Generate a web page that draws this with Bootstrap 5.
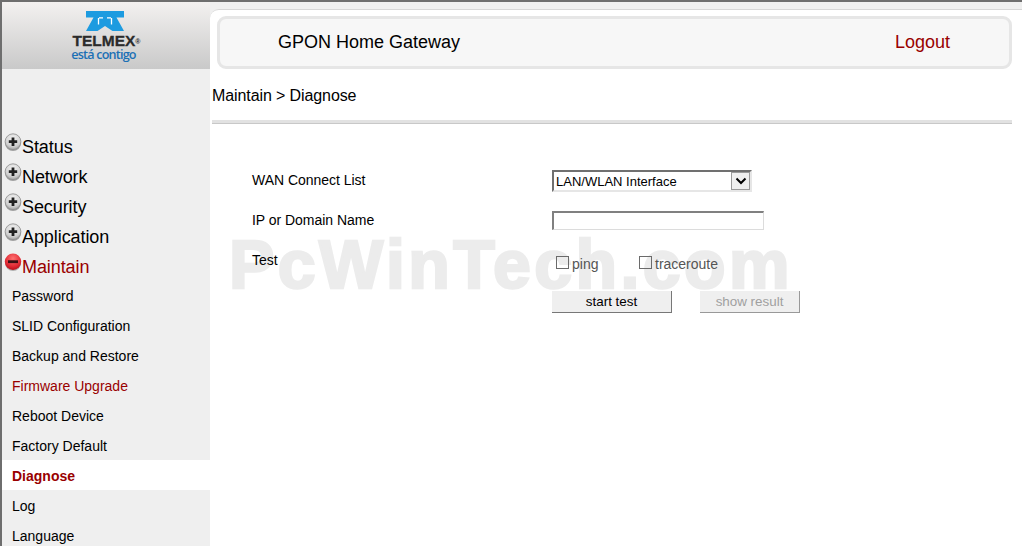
<!DOCTYPE html>
<html lang="en">
<head>
<meta charset="utf-8">
<title>GPON Home Gateway</title>
<link rel="stylesheet" href="https://cdn.jsdelivr.net/npm/bootstrap@5.3.0/dist/css/bootstrap.min.css">
<style>
html,body{height:546px;overflow:hidden;background:#fff}
body{font-family:"Liberation Sans",Arial,sans-serif;color:#000;font-size:14px;line-height:1.2}
.gw-shell{height:546px;border-top:2px solid #6e6e6e;border-left:2px solid #6e6e6e;position:relative;overflow:hidden}
.gw-side{width:208px;flex:none;background:#efefef;height:544px}
.gw-logo{height:67px;background:linear-gradient(#f3f1f0,#c9c9c9);padding-top:9px}
.gw-logo svg{display:block;margin-left:-3px}
.gw-word{font-weight:700;font-size:15.5px;line-height:11px;color:#2b2b2b;-webkit-text-stroke:.3px #2b2b2b;margin-top:4px;margin-left:1px}
.gw-reg{font-size:7px;vertical-align:top;-webkit-text-stroke:0;line-height:14px}
.gw-tag{font-family:"Open Sans","Liberation Sans",sans-serif;font-size:12.6px;line-height:8px;margin-top:2px;font-weight:600;color:#1c70b5;letter-spacing:-.8px;margin-left:-5px}
.gw-menu{margin-top:61px}
.gw-cat{height:30px;font-size:18px;color:#000;padding-left:2px;text-decoration:none;line-height:34px;letter-spacing:-.08px}
.gw-cat svg{flex:none;margin-top:3px}
.gw-cat.is-open{color:#990000}
.gw-sub{height:30px;line-height:32px;padding-left:10px;font-size:14px;color:#000;text-decoration:none;display:block}
.gw-sub.is-hot{color:#990000}
.gw-sub.is-active{background:#fff;color:#990000;font-weight:700}
.gw-main{flex:1;min-width:0;background:#efefef;height:544px}
.gw-strip{height:7px}
.gw-wrap{height:537px;background:#fff;border-top-left-radius:9px;border-top:1px solid #d6d6d6;position:relative;overflow:hidden}
.gw-topbar{margin:6px 10px 0 7px;height:53px;background:#f7f7f7;border:3px solid #e6e6e6;border-radius:9px;font-size:18px;padding:0 59px 0 58px}
.gw-logout{color:#990000;text-decoration:none}
.gw-crumb{margin:0 10px 0 2px;height:54px;font-size:16px;line-height:54px;letter-spacing:-.1px;border-bottom:3px solid #e2e2e2;box-shadow:0 1px 0 #c8c8c8}
.gw-form{padding:47px 0 0 42px;position:relative;z-index:2}
.gw-line{height:40px}
.gw-line-test{height:41px}
.gw-label{width:300px;flex:none;line-height:20px;font-size:14px;letter-spacing:-.03px}
.gw-select{width:200px;height:22px;border-style:solid;border-width:2px;border-color:#707070 #e6e6e6 #e6e6e6 #707070;padding:0 0 0 2px;font-size:13px;line-height:19px;color:#000;background-color:#fff;position:relative}
.gw-arrow{position:absolute;right:0;top:0;width:19px;height:18px;background:#efefef;border:1px solid #9a9a9a;display:flex;align-items:center;justify-content:center}
.gw-field{width:212px;height:19px;margin-top:1px;border-radius:0;border-style:solid;border-width:2px 1px 1px 2px;border-color:#808080 #dcdcdc #dcdcdc #808080;padding:0 2px;font-size:12px;box-shadow:none;min-height:0}
.gw-checks{padding:0 0 0 4px;height:20px;margin-top:4px}
.gw-check{display:flex;align-items:center;color:#555;font-size:14px;margin:0;line-height:20px}
.gw-box{width:13px;height:13px;border:1px solid #6b6b6b;background:transparent;margin-right:3px;margin-top:-3px;appearance:none;border-radius:0;flex:none}
.gw-check-a{width:83px}
.gw-btn{width:120px;height:22px;border-radius:0;border-style:solid;border-width:0 1px 1px 0;border-color:#777;background:#efefef;color:#000;font-size:13.4px;line-height:20px;padding:0}
.gw-btn:disabled{width:100px;color:#a0a0a0;background:#efefef;border-color:#999;opacity:1}
.gw-gap{gap:28px}
.gw-mark{position:absolute;left:19px;top:216px;font-weight:700;font-size:68px;line-height:76px;letter-spacing:3.4px;color:#ececec;-webkit-text-stroke:2.5px #ececec;white-space:nowrap;pointer-events:none;z-index:0}
</style>
</head>
<body>
<div class="gw-shell d-flex">
  <aside class="gw-side">
    <div class="gw-logo d-flex flex-column align-items-center">
      <svg width="38" height="20" viewBox="0 0 38 20">
        <path fill="#1d9be0" d="M0 0H38V6.5H30.5L38 20H26.5L19 15L11.5 20H0L7.5 6.5H0Z"/>
        <path d="M12.5 7V13.5M25.5 7V13.5M13 6.8H17M21 6.8H25" stroke="#fff" stroke-width="1.3" fill="none"/>
      </svg>
      <div class="gw-word">TELMEX<span class="gw-reg">®</span></div>
      <div class="gw-tag">está contigo</div>
    </div>
    <nav class="gw-menu">
      <a class="gw-cat d-flex" href="#"><svg width="18" height="19" viewBox="0 0 18 19"><defs><radialGradient id="gg" cx="50%" cy="30%" r="70%"><stop offset="0" stop-color="#f2f2f2"/><stop offset=".7" stop-color="#d2d2d2"/><stop offset="1" stop-color="#a4a4a4"/></radialGradient><radialGradient id="gr" cx="50%" cy="30%" r="70%"><stop offset="0" stop-color="#ff7070"/><stop offset=".7" stop-color="#e02a34"/><stop offset="1" stop-color="#b8101c"/></radialGradient></defs><ellipse cx="9" cy="10" rx="8" ry="8" fill="#a0a0a0"/><circle cx="9" cy="8.7" r="7.9" fill="url(#gg)" stroke="#8e8e8e" stroke-width=".8"/><path d="M4.8 8.7H13.2M9 4.5V12.9" stroke="#222" stroke-width="2.8"/></svg>Status</a>
      <a class="gw-cat d-flex" href="#"><svg width="18" height="19" viewBox="0 0 18 19"><ellipse cx="9" cy="10" rx="8" ry="8" fill="#a0a0a0"/><circle cx="9" cy="8.7" r="7.9" fill="url(#gg)" stroke="#8e8e8e" stroke-width=".8"/><path d="M4.8 8.7H13.2M9 4.5V12.9" stroke="#222" stroke-width="2.8"/></svg>Network</a>
      <a class="gw-cat d-flex" href="#"><svg width="18" height="19" viewBox="0 0 18 19"><ellipse cx="9" cy="10" rx="8" ry="8" fill="#a0a0a0"/><circle cx="9" cy="8.7" r="7.9" fill="url(#gg)" stroke="#8e8e8e" stroke-width=".8"/><path d="M4.8 8.7H13.2M9 4.5V12.9" stroke="#222" stroke-width="2.8"/></svg>Security</a>
      <a class="gw-cat d-flex" href="#"><svg width="18" height="19" viewBox="0 0 18 19"><ellipse cx="9" cy="10" rx="8" ry="8" fill="#a0a0a0"/><circle cx="9" cy="8.7" r="7.9" fill="url(#gg)" stroke="#8e8e8e" stroke-width=".8"/><path d="M4.8 8.7H13.2M9 4.5V12.9" stroke="#222" stroke-width="2.8"/></svg>Application</a>
      <a class="gw-cat is-open d-flex" href="#"><svg width="18" height="19" viewBox="0 0 18 19"><ellipse cx="9" cy="10" rx="8" ry="8" fill="#b0b0b0"/><circle cx="9" cy="8.7" r="8.2" fill="url(#gr)"/><path d="M4 8.7H14" stroke="#3a1014" stroke-width="2.8"/></svg>Maintain</a>
      <a class="gw-sub" href="#">Password</a>
      <a class="gw-sub" href="#">SLID Configuration</a>
      <a class="gw-sub" href="#">Backup and Restore</a>
      <a class="gw-sub is-hot" href="#">Firmware Upgrade</a>
      <a class="gw-sub" href="#">Reboot Device</a>
      <a class="gw-sub" href="#">Factory Default</a>
      <a class="gw-sub is-active" href="#">Diagnose</a>
      <a class="gw-sub" href="#">Log</a>
      <a class="gw-sub" href="#">Language</a>
    </nav>
  </aside>
  <main class="gw-main">
    <div class="gw-strip"></div>
    <div class="gw-wrap">
      <div class="gw-topbar d-flex justify-content-between align-items-center">
        <span>GPON Home Gateway</span>
        <a class="gw-logout" href="#">Logout</a>
      </div>
      <div class="gw-crumb">Maintain &gt; Diagnose</div>
      <div class="gw-mark">PcWinTech.com</div>
      <form class="gw-form">
        <div class="gw-line d-flex">
          <div class="gw-label">WAN Connect List</div>
          <div class="gw-select">LAN/WLAN Interface<span class="gw-arrow"><svg width="12" height="8" viewBox="0 0 12 8"><path d="M1.5 1.5L6 6L10.5 1.5" fill="none" stroke="#000" stroke-width="2"/></svg></span></div>
        </div>
        <div class="gw-line d-flex">
          <div class="gw-label">IP or Domain Name</div>
          <input class="form-control gw-field" type="text" aria-label="IP or Domain Name">
        </div>
        <div class="gw-line-test d-flex">
          <div class="gw-label">Test</div>
          <div class="gw-checks d-flex">
            <label class="gw-check gw-check-a"><input class="gw-box" type="checkbox">ping</label>
            <label class="gw-check"><input class="gw-box" type="checkbox">traceroute</label>
          </div>
        </div>
        <div class="d-flex">
          <div class="gw-label"></div>
          <div class="d-flex gw-gap">
            <button type="button" class="btn gw-btn">start test</button>
            <button type="button" class="btn gw-btn" disabled>show result</button>
          </div>
        </div>
      </form>
    </div>
  </main>
</div>
<script src="https://cdn.jsdelivr.net/npm/bootstrap@5.3.0/dist/js/bootstrap.bundle.min.js"></script>
</body>
</html>
